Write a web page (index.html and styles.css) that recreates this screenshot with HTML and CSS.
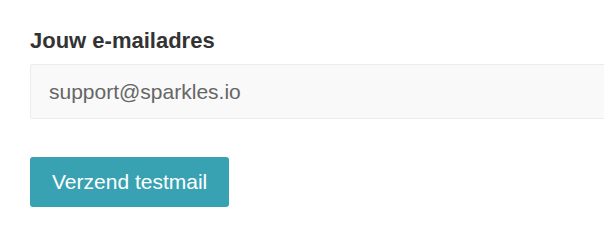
FILE: index.html
```html
<!DOCTYPE html>
<html lang="nl">
<head>
  <meta charset="UTF-8" />
  <title>Testmail</title>
  <meta name="viewport" content="width=device-width, initial-scale=1" />
  <link rel="stylesheet" href="styles.css">
</head>
<body>
  <form class="testmail-form">
    <label class="field-label" for="email">Jouw e-mailadres</label>
    <input type="email" id="email" class="field-input" value="support@sparkles.io" />
    <button type="button" class="send-btn">Verzend testmail</button>
  </form>
</body>
</html>
```

FILE: styles.css
```css
html, body {
  margin: 0;
  overflow: hidden;
}
body {
  font-family: 'Liberation Sans', Arial, sans-serif;
  background: #fff;
  color: #333;
  padding: 28px 0 0 30px;
}
.testmail-form {
  display: flex;
  flex-direction: column;
  align-items: flex-start;
  width: 700px;
}
.field-label {
  font-size: 22px;
  font-weight: bold;
  line-height: 26px;
  color: #333;
  margin-bottom: 10px;
}
.field-input {
  box-sizing: border-box;
  width: 100%;
  height: 55px;
  padding: 0 18px;
  font-family: inherit;
  font-size: 21px;
  color: #666;
  background: #f9f9f9;
  border: 1px solid #ececec;
  border-radius: 2px;
  outline: none;
}
.send-btn {
  margin-top: 38px;
  height: 50px;
  padding: 0 22px;
  font-family: inherit;
  font-size: 21px;
  color: #fff;
  background: #38a2b3;
  border: none;
  border-radius: 3px;
  cursor: pointer;
}
```
